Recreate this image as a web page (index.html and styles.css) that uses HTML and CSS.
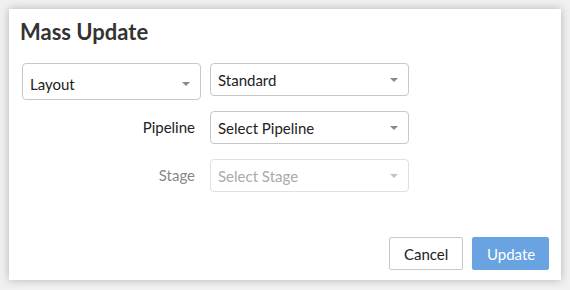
FILE: index.html
```html
<!DOCTYPE html>
<html lang="en">
<head>
  <meta charset="UTF-8">
  <title>Mass Update</title>
  <link rel="stylesheet" href="styles.css">
</head>
<body>
  <div class="dialog">
    <div class="dialog-title">Mass Update</div>
    <div class="form">
      <div class="row row-layout">
        <div class="field-pick">
          <div class="select select-tall">
            <span>Layout</span>
            <span class="caret"></span>
          </div>
        </div>
        <div class="select">
          <span>Standard</span>
          <span class="caret"></span>
        </div>
      </div>
      <div class="row">
        <div class="label">Pipeline</div>
        <div class="select">
          <span>Select Pipeline</span>
          <span class="caret"></span>
        </div>
      </div>
      <div class="row">
        <div class="label muted">Stage</div>
        <div class="select disabled">
          <span>Select Stage</span>
          <span class="caret"></span>
        </div>
      </div>
    </div>
    <div class="footer">
      <button class="btn btn-cancel">Cancel</button>
      <button class="btn btn-primary">Update</button>
    </div>
  </div>
</body>
</html>
```

FILE: styles.css
```css
:root {
  --text: #222;
  --muted: #888;
  --border: #c8c8c8;
  --accent: #69a3e2;
}
html, body {
  margin: 0;
  padding: 0;
  background: #f0f0f0;
  font-family: 'Lato', 'Liberation Sans', sans-serif;
  color: var(--text);
}
body {
  padding: 9px;
  height: 290px;
  box-sizing: border-box;
}

.dialog {
  background: #fff;
  width: 552px;
  height: 271px;
  box-sizing: border-box;
  box-shadow: 0 0 8px rgba(0,0,0,0.25);
  padding: 10px 12px 10px 13px;
  display: flex;
  flex-direction: column;
}
.dialog-title {
  font-size: 22px;
  font-weight: 700;
  color: #333;
  line-height: 26px;
  margin-bottom: 18px;
  margin-left: -2px;
}

.form {
  display: flex;
  flex-direction: column;
  gap: 15px;
  flex: 1;
}
.row {
  display: flex;
  align-items: flex-start;
  gap: 9px;
}
.row-layout {
  height: 33px;
}
.field-pick, .label {
  width: 179px;
  flex: none;
}
.label {
  text-align: right;
  font-size: 15px;
  line-height: 32px;
  padding-right: 6px;
  box-sizing: border-box;
}
.label.muted { color: var(--muted); }

.select {
  width: 199px;
  height: 33px;
  box-sizing: border-box;
  border: 1px solid var(--border);
  border-radius: 4px;
  display: flex;
  align-items: center;
  justify-content: space-between;
  padding: 0 10px 0 7px;
  font-size: 15px;
  color: #222;
  background: #fff;
}
.select-tall {
  width: 179px;
  height: 37px;
  padding-top: 4px;
}
.select.disabled {
  color: #aaa;
  border-color: #e0e0e0;
}
.caret {
  width: 0;
  height: 0;
  border-left: 4px solid transparent;
  border-right: 4px solid transparent;
  border-top: 4px solid #888;
}
.disabled .caret { border-top-color: #c4c4c4; }

.footer {
  display: flex;
  justify-content: flex-end;
  gap: 9px;
}
.btn {
  height: 33px;
  font-family: inherit;
  font-size: 15px;
  border-radius: 2px;
  padding: 0 14px;
  cursor: pointer;
}
.btn-cancel {
  width: 74px;
  background: #fff;
  border: 1px solid #c8c8c8;
  color: #222;
}
.btn-primary {
  width: 77px;
  background: var(--accent);
  border: 1px solid var(--accent);
  color: #fff;
}
```
